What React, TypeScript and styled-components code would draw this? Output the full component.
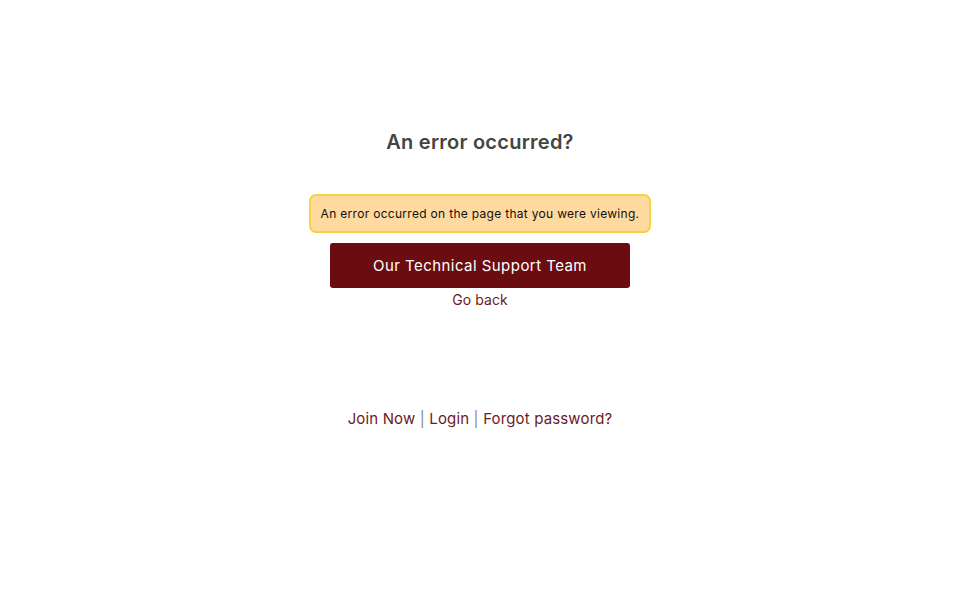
import React from 'react';
import styled, {createGlobalStyle} from 'styled-components';

const GlobalStyle = createGlobalStyle`
  body {
    margin: 0;
    background: #ffffff;
    font-family: "Inter", "Noto Sans", sans-serif;
  }
`

const Page = styled.div`
  display: flex;
  flex-direction: column;
  align-items: center;
  padding-top: 128px;
`

const Title = styled.h1`
  margin: 0;
  font-size: 20px;
  line-height: 28px;
  font-weight: 600;
  color: #444444;
  letter-spacing: 0.25px;
`

const Alert = styled.div`
  margin-top: 38px;
  width: 342px;
  height: 39px;
  box-sizing: border-box;
  display: flex;
  align-items: center;
  justify-content: center;
  background: #fed9a0;
  border: 2px solid #f7d23e;
  border-radius: 7px;
  font-size: 12px;
  letter-spacing: 0.3px;
  color: #111111;
`

const SupportButton = styled.button`
  margin-top: 10px;
  width: 300px;
  height: 45px;
  border: none;
  border-radius: 3px;
  background: #6b0d10;
  color: #ffffff;
  font-family: inherit;
  font-size: 15px;
  letter-spacing: 0.45px;
  cursor: pointer;
`

const BackLink = styled.a`
  margin-top: 2px;
  font-size: 14px;
  line-height: 20px;
  letter-spacing: 0.1px;
  color: #6b1a20;
  text-decoration: none;
`

const Footer = styled.div`
  margin-top: 98px;
  font-size: 15px;
  line-height: 22px;
  letter-spacing: 0.15px;
  color: #888888;
`

const FooterLink = styled.a`
  color: #6b1a26;
  text-decoration: none;
`

export default function App() {
    return (
        <>
            <GlobalStyle/>
            <Page>
                <Title>An error occurred?</Title>
                <Alert>An error occurred on the page that you were viewing.</Alert>
                <SupportButton>Our Technical Support Team</SupportButton>
                <BackLink href="#">Go back</BackLink>
                <Footer>
                    <FooterLink href="#">Join Now</FooterLink> | <FooterLink href="#">Login</FooterLink> | <FooterLink href="#">Forgot password?</FooterLink>
                </Footer>
            </Page>
        </>
    )
}
